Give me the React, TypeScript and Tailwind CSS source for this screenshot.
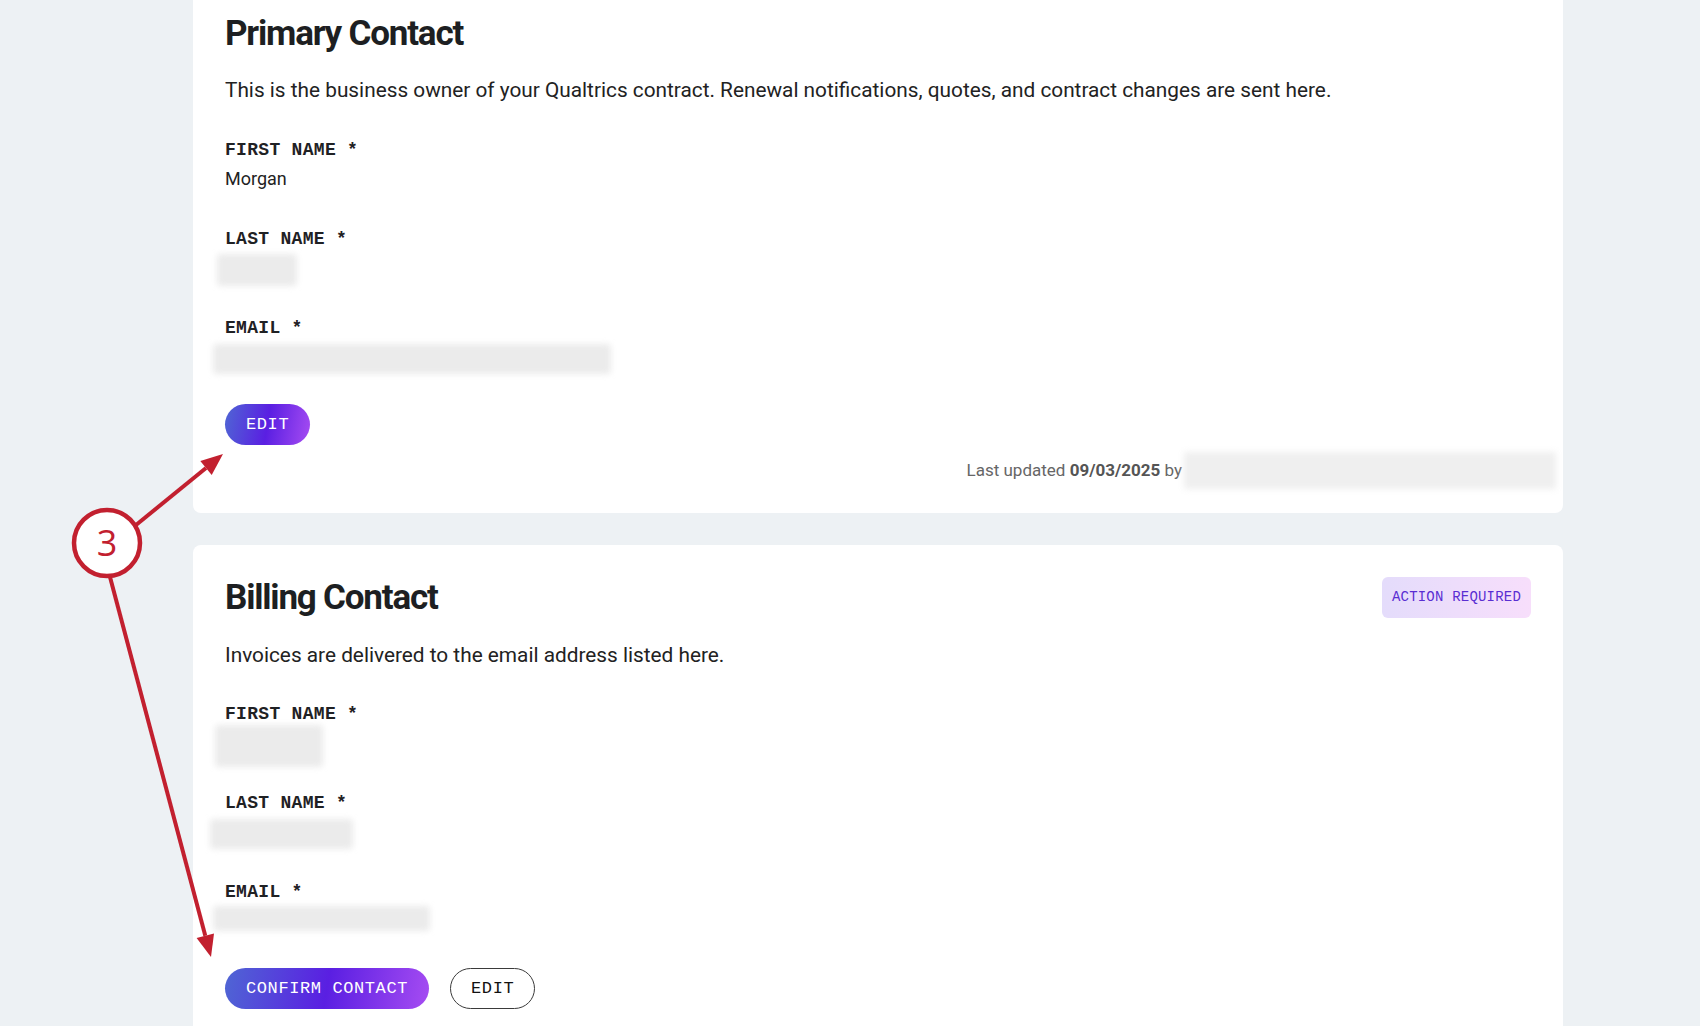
import React from "react";

const mono = { fontFamily: '"Liberation Mono", "DejaVu Sans Mono", monospace' };

function Label({ children }: { children: React.ReactNode }) {
  return (
    <div className="text-[18px] leading-6 font-bold tracking-[0.3px] text-[#1f2124]" style={mono}>
      {children}
    </div>
  );
}

function Blurred({ w, h, ml = -10 }: { w: number; h: number; ml?: number }) {
  return (
    <div className="h-7 flex items-center">
      <div
        className="bg-[#ebebeb] rounded blur-[3px] shrink-0"
        style={{ width: w, height: h, marginLeft: ml }}
      />
    </div>
  );
}

function GradientButton({ children }: { children: React.ReactNode }) {
  return (
    <button
      className="h-[41px] px-[21px] rounded-full text-white text-[17px] tracking-[0.6px] bg-[linear-gradient(100deg,#4f66d4_0%,#5a1fe2_50%,#a64cf2_100%)]"
      style={mono}
    >
      {children}
    </button>
  );
}

export default function App() {
  return (
    <div
      className="relative min-h-screen h-[1026px] overflow-hidden bg-[#edf1f4]"
      style={{ fontFamily: 'Roboto, "Noto Sans", sans-serif' }}
    >
      <div className="ml-[193px] w-[1370px] mt-[-20px] flex flex-col gap-8">
        {/* Primary Contact */}
        <div className="bg-white rounded-lg px-8 pt-8 pb-[24px]">
          <h2 className="mt-[2px] text-[35px] leading-10 font-bold tracking-[-1.2px] text-[#1d1f22]">
            Primary Contact
          </h2>
          <p className="mt-[22px] text-[20.8px] leading-7 text-[#222]">
            This is the business owner of your Qualtrics contract. Renewal notifications, quotes, and contract changes are sent here.
          </p>
          <div className="mt-[34px]">
            <Label>FIRST NAME *</Label>
            <div className="mt-[3px] text-[18px] leading-7 text-[#222]">Morgan</div>
          </div>
          <div className="mt-[34px]">
            <Label>LAST NAME *</Label>
            <div className="mt-[5px]">
              <Blurred w={80} h={32} ml={-8} />
            </div>
          </div>
          <div className="mt-8">
            <Label>EMAIL *</Label>
            <div className="mt-[5px]">
              <Blurred w={398} h={30} ml={-12} />
            </div>
          </div>
          <div className="mt-[31px]">
            <GradientButton>EDIT</GradientButton>
          </div>
          <div className="mt-[7px] flex justify-end items-center h-[37px] text-[17px] text-[#666]">
            <span>
              Last updated <span className="font-bold text-[#555]">09/03/2025</span> by
            </span>
            <div className="ml-[2px] w-[372px] h-[37px] bg-[#efefef] blur-[3px] -mr-[25px]" />
          </div>
        </div>

        {/* Billing Contact */}
        <div className="bg-white rounded-lg px-8 pt-8 pb-10">
          <div className="flex items-center justify-between">
            <h2 className="text-[35px] leading-10 font-bold tracking-[-1.2px] text-[#1d1f22]">
              Billing Contact
            </h2>
            <span
              className="h-[41px] px-[10px] flex items-center rounded-[6px] text-[14px] tracking-[0.2px] text-[#5a2ed2] bg-[linear-gradient(90deg,#e4dcfb,#f7defb)]"
              style={mono}
            >
              ACTION REQUIRED
            </span>
          </div>
          <p className="mt-[23px] text-[20.8px] leading-7 text-[#222]">
            Invoices are delivered to the email address listed here.
          </p>
          <div className="mt-[33px]">
            <Label>FIRST NAME *</Label>
            <div className="mt-[6px]">
              <Blurred w={108} h={42} ml={-10} />
            </div>
          </div>
          <div className="mt-[31px]">
            <Label>LAST NAME *</Label>
            <div className="mt-[5px]">
              <Blurred w={143} h={30} ml={-15} />
            </div>
          </div>
          <div className="mt-8">
            <Label>EMAIL *</Label>
            <div className="mt-0">
              <Blurred w={217} h={25} ml={-12} />
            </div>
          </div>
          <div className="mt-[36px] flex items-center gap-[21px]">
            <GradientButton>CONFIRM CONTACT</GradientButton>
            <button
              className="h-[41px] px-[20px] rounded-full border border-[#3a3a3a] text-[#111] text-[17px] tracking-[0.6px]"
              style={mono}
            >
              EDIT
            </button>
          </div>
        </div>
      </div>

      {/* annotation overlay */}
      <svg
        className="absolute inset-0 pointer-events-none"
        width="1700"
        height="1026"
        viewBox="0 0 1700 1026"
      >
        <line x1="136" y1="525" x2="206" y2="468" stroke="#c2202f" strokeWidth="4" />
        <polygon points="223,454 211.7,474.9 200.3,460.9" fill="#c2202f" />
        <line x1="110" y1="577" x2="205.3" y2="935.7" stroke="#c2202f" strokeWidth="4" />
        <polygon points="211,957 196.6,938 214,933.4" fill="#c2202f" />
        <circle cx="107" cy="543" r="33" fill="#fff" stroke="#c2202f" strokeWidth="4.5" />
        <text
          x="107"
          y="556"
          textAnchor="middle"
          fontSize="36"
          fill="#c2202f"
          fontFamily='"Open Sans", Roboto, sans-serif'
        >
          3
        </text>
      </svg>
    </div>
  );
}
